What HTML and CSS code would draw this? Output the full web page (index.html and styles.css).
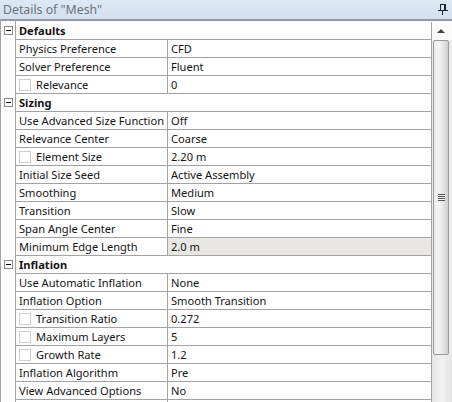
FILE: index.html
```html
<!DOCTYPE html>
<html>
<head>
<meta charset="utf-8">
<link rel="stylesheet" href="styles.css">
</head>
<body>
<div class="panel">
  <div class="title">
    <span class="title-text">Details of "Mesh"</span>
    <svg class="pin" width="10" height="12" viewBox="0 0 10 12">
      <rect x="2" y="0" width="6" height="1" fill="#1b2633"/>
      <rect x="2" y="1" width="1" height="6" fill="#1b2633"/>
      <rect x="6" y="1" width="2" height="6" fill="#1b2633"/>
      <rect x="0" y="6" width="10" height="1" fill="#1b2633"/>
      <rect x="4" y="7" width="1" height="4" fill="#1b2633"/>
    </svg>
  </div>
  <div class="body">
    <div class="grid">
      <div class="row"><div class="gutter"><span class="minus"></span></div><div class="cat">Defaults</div></div>
      <div class="row"><div class="gutter"></div><div class="name">Physics Preference</div><div class="value">CFD</div></div>
      <div class="row"><div class="gutter"></div><div class="name">Solver Preference</div><div class="value">Fluent</div></div>
      <div class="row"><div class="gutter"></div><div class="name"><span class="check"></span>Relevance</div><div class="value">0</div></div>
      <div class="row"><div class="gutter"><span class="minus"></span></div><div class="cat">Sizing</div></div>
      <div class="row"><div class="gutter"></div><div class="name">Use Advanced Size Function</div><div class="value">Off</div></div>
      <div class="row"><div class="gutter"></div><div class="name">Relevance Center</div><div class="value">Coarse</div></div>
      <div class="row"><div class="gutter"></div><div class="name"><span class="check"></span>Element Size</div><div class="value">2.20 m</div></div>
      <div class="row"><div class="gutter"></div><div class="name">Initial Size Seed</div><div class="value">Active Assembly</div></div>
      <div class="row"><div class="gutter"></div><div class="name">Smoothing</div><div class="value">Medium</div></div>
      <div class="row"><div class="gutter"></div><div class="name">Transition</div><div class="value">Slow</div></div>
      <div class="row"><div class="gutter"></div><div class="name">Span Angle Center</div><div class="value">Fine</div></div>
      <div class="row"><div class="gutter"></div><div class="name">Minimum Edge Length</div><div class="value readonly">2.0 m</div></div>
      <div class="row"><div class="gutter"><span class="minus"></span></div><div class="cat">Inflation</div></div>
      <div class="row"><div class="gutter"></div><div class="name">Use Automatic Inflation</div><div class="value">None</div></div>
      <div class="row"><div class="gutter"></div><div class="name">Inflation Option</div><div class="value">Smooth Transition</div></div>
      <div class="row"><div class="gutter"></div><div class="name"><span class="check"></span>Transition Ratio</div><div class="value">0.272</div></div>
      <div class="row"><div class="gutter"></div><div class="name"><span class="check"></span>Maximum Layers</div><div class="value">5</div></div>
      <div class="row"><div class="gutter"></div><div class="name"><span class="check"></span>Growth Rate</div><div class="value">1.2</div></div>
      <div class="row"><div class="gutter"></div><div class="name">Inflation Algorithm</div><div class="value">Pre</div></div>
      <div class="row"><div class="gutter"></div><div class="name">View Advanced Options</div><div class="value">No</div></div>
      <div class="row"><div class="gutter"></div><div class="name"></div><div class="value"></div></div>
    </div>
    <div class="scroll">
      <div class="arrow-btn"><span class="arrow"></span></div>
      <div class="thumb"><span class="grip"></span></div>
      <div class="track"></div>
    </div>
  </div>
</div>
</body>
</html>
```
FILE: styles.css
```css
html, body {
  margin: 0;
  padding: 0;
  background: #ffffff;
}
body {
  width: 452px;
  height: 402px;
  overflow: hidden;
  font-family: "Noto Sans", "Open Sans", sans-serif;
  font-size: 11.1px;
  color: #141414;
}
.panel {
  display: flex;
  flex-direction: column;
  height: 402px;
}
.title {
  height: 19px;
  flex: none;
  border-bottom: 2px solid #8f9aa6;
  background: linear-gradient(#dde8f4, #d3e0ef);
  display: flex;
  align-items: center;
  justify-content: space-between;
  padding: 0 4px 0 3px;
  color: #6a737d;
  font-size: 12.3px;
}
.title-text {
  line-height: 19px;
}
.pin {
  display: block;
  margin-top: 1px;
}
.body {
  flex: 1;
  display: flex;
  min-height: 0;
  overflow: hidden;
}
.grid {
  width: 431px;
  flex: none;
  border-left: 1px solid #a3a3a3;
  display: flex;
  flex-direction: column;
  padding-top: 1px;
  background: linear-gradient(to right, transparent 14px, #a3a3a3 14px, #a3a3a3 15px, transparent 15px);
}
.row {
  display: flex;
  height: 18px;
  flex: none;
}
.gutter {
  width: 14px;
  flex: none;
  border-right: 1px solid #a3a3a3;
  display: flex;
  align-items: center;
}
.minus {
  width: 7px;
  height: 7px;
  margin-left: 3px;
  margin-top: -1px;
  border: 1px solid #8a8a8a;
  background: linear-gradient(#000, #000) center / 5px 1px no-repeat, #fff;
}
.cat, .name, .value {
  box-sizing: border-box;
  height: 18px;
  border-bottom: 1px solid #a3a3a3;
  border-right: 1px solid #a3a3a3;
  display: flex;
  align-items: center;
  padding-left: 3px;
  white-space: nowrap;
  overflow: hidden;
}
.cat {
  width: 416px;
  font-weight: bold;
}
.name {
  width: 152px;
}
.value {
  width: 264px;
}
.readonly {
  background: #e8e7e3;
}
.check {
  width: 10px;
  height: 10px;
  border: 1px solid #cfcfcf;
  background: #fff;
  margin-right: 5px;
  flex: none;
}
.scroll {
  width: 20px;
  flex: none;
  display: flex;
  flex-direction: column;
  background: #ececec;
}
.arrow-btn {
  height: 19px;
  flex: none;
  background: #fafafa;
  display: flex;
  justify-content: center;
  align-items: center;
}
.arrow {
  width: 0;
  height: 0;
  border-left: 4px solid transparent;
  border-right: 4px solid transparent;
  border-bottom: 4px solid #404040;
  margin-left: -2px;
}
.thumb {
  height: 313px;
  width: 14px;
  flex: none;
  margin-left: 1px;
  border: 1px solid #9a9a9a;
  border-radius: 2px;
  background: linear-gradient(to right, #ececec, #f4f4f4 35%, #e2e2e2 70%, #cfcfcf);
  display: flex;
  align-items: center;
  justify-content: center;
}
.grip {
  width: 7px;
  height: 7px;
  background: repeating-linear-gradient(#555 0 1px, #f4f4f4 1px 2px);
}
.track {
  flex: 1;
  background: linear-gradient(to right, #e4e4e4, #f2f2f2 50%, #e4e4e4);
}
```
